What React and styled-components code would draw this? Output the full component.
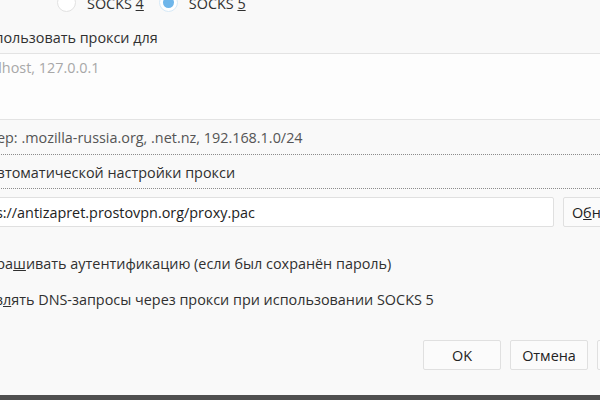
import React from 'react';
import styled, { createGlobalStyle } from 'styled-components';

const GlobalStyle = createGlobalStyle`
  html, body {
    margin: 0;
    padding: 0;
    background: #f9f9f9;
    overflow: hidden;
  }
  body {
    font-family: "Open Sans", "Noto Sans", sans-serif;
    font-size: 14.4px;
    color: #303030;
  }
`;

const Page = styled.div`
  width: 600px;
  height: 400px;
  overflow: hidden;
  display: flex;
  flex-direction: column;
  background: #f9f9f9;
`;

const Dialog = styled.div`
  width: 760px;
  margin-top: -10px;
  margin-left: -60px;
  display: flex;
  flex-direction: column;
`;

const SocksRow = styled.div`
  display: flex;
  align-items: center;
  height: 24px;
  padding-left: 117px;
`;

const RadioOption = styled.label`
  display: flex;
  align-items: center;
  gap: 11px;
  margin-right: 15px;
  line-height: 20px;
`;

const RadioText = styled.span`
  padding-top: 4px;
`;

const RadioCircle = styled.span`
  box-sizing: border-box;
  width: 19px;
  height: 19px;
  border-radius: 50%;
  background: #fff;
  border: 1px solid ${p => (p.$checked ? '#d6e9f7' : '#e2e2e2')};
  display: flex;
  align-items: center;
  justify-content: center;
  &::after {
    content: '';
    width: 11px;
    height: 11px;
    border-radius: 50%;
    background: ${p => (p.$checked ? '#6fb6ea' : 'transparent')};
  }
`;

const Label = styled.div`
  line-height: 20px;
  margin-top: ${p => p.$top}px;
  padding-left: ${p => p.$indent}px;
  color: ${p => p.$muted ? '#555' : '#303030'};
  white-space: nowrap;
`;

const TextArea = styled.textarea`
  box-sizing: border-box;
  display: block;
  margin-top: 5px;
  margin-left: ${p => p.$indent}px;
  width: 720px;
  height: 67px;
  padding: 4px 7px;
  border: 1px solid #e3e3e3;
  background: #fdfdfd;
  font: inherit;
  line-height: 20px;
  resize: none;
  outline: none;
  &::placeholder {
    color: #a8a8a8;
  }
`;

const FocusBox = styled.div`
  box-sizing: border-box;
  margin-top: 6px;
  height: 35px;
  border-top: 1px dotted #8c8c8c;
  border-bottom: 1px dotted #8c8c8c;
  padding: 8px 0 5px ${p => p.$indent}px;
  line-height: 20px;
  white-space: nowrap;
`;

const UrlRow = styled.div`
  display: flex;
  align-items: center;
  gap: 9px;
  margin-top: 8px;
  padding-left: ${p => p.$indent}px;
`;

const UrlInput = styled.input`
  box-sizing: border-box;
  width: ${p => p.$width}px;
  height: 30px;
  padding: 0 7px;
  border: 1px solid #e0e0e0;
  border-radius: 2px;
  background: #fff;
  font: inherit;
  color: #222;
  outline: none;
`;

const Button = styled.button`
  box-sizing: border-box;
  width: ${p => p.$width || 78}px;
  height: 30px;
  padding: 0;
  border: 1px solid #e0e0e0;
  border-radius: 2px;
  background: #fbfbfb;
  font: inherit;
  color: #222;
`;

const Footer = styled.div`
  display: flex;
  gap: 9px;
  margin-top: 30px;
  padding-left: 483px;
`;

const BottomBar = styled.div`
  margin-top: auto;
  height: 5px;
  background: #4f4f4f;
`;

export default function App() {
  return (
    <Page>
      <GlobalStyle />
      <Dialog>
        <SocksRow>
          <RadioOption>
            <RadioCircle />
            <RadioText>SOCKS <u>4</u></RadioText>
          </RadioOption>
          <RadioOption>
            <RadioCircle $checked />
            <RadioText>SOCKS <u>5</u></RadioText>
          </RadioOption>
        </SocksRow>

        <Label $top={14} $indent={16}>Не использовать прокси для</Label>
        <TextArea $indent={23} placeholder="localhost, 127.0.0.1" readOnly />
        <Label $top={8} $indent={18} $muted>
          Пример: .mozilla-russia.org, .net.nz, 192.168.1.0/24
        </Label>

        <FocusBox $indent={18}>URL автоматической настройки прокси</FocusBox>

        <UrlRow $indent={20}>
          <UrlInput $width={594} defaultValue="https://antizapret.prostovpn.org/proxy.pac" readOnly />
          <Button $width={88}>О<u>б</u>новить</Button>
        </UrlRow>

        <Label $top={27} $indent={10}>Не запра<u>ш</u>ивать аутентификацию (если был сохранён пароль)</Label>
        <Label $top={16} $indent={11}>Отправ<u>л</u>ять DNS-запросы через прокси при использовании SOCKS 5</Label>

        <Footer>
          <Button>OK</Button>
          <Button>Отмена</Button>
          <Button>Справка</Button>
        </Footer>
      </Dialog>
      <BottomBar />
    </Page>
  );
}
